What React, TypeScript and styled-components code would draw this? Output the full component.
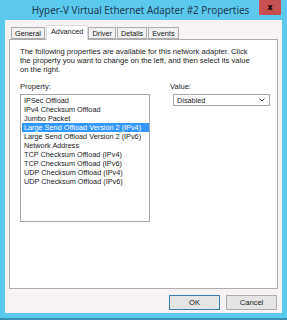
import React, { useState } from "react";
import styled, { createGlobalStyle } from "styled-components";

const GlobalStyle = createGlobalStyle`
  html, body {
    margin: 0;
    padding: 0;
    background: #5bc8ee;
  }
`;

const Frame = styled.div`
  width: 287px;
  height: 320px;
  box-sizing: border-box;
  background: #5bc8ee;
  border-bottom: 2px solid #3a8fb4;
  display: flex;
  flex-direction: column;
  padding: 0 5px 5px 5px;
  font-family: "Liberation Sans", Arial, sans-serif;
`;

const TitleBar = styled.div`
  height: 20px;
  flex: none;
  position: relative;
  display: flex;
  align-items: center;
  justify-content: center;
  padding-right: 6px;
  font-family: "Noto Sans", "Open Sans", sans-serif;
  font-size: 9.9px;
  color: #1f3850;
`;

const CloseButton = styled.div`
  position: absolute;
  top: 0;
  right: 1px;
  width: 22px;
  height: 15px;
  background: #c75050;
  color: #000;
  font-family: "DejaVu Sans", sans-serif;
  font-size: 8px;
  font-weight: bold;
  display: flex;
  align-items: center;
  justify-content: center;
`;

const Client = styled.div`
  flex: 1;
  background: #f6f2f6;
  border-left: 1px solid #eaf6fb;
  display: flex;
  flex-direction: column;
  padding: 5px 4px 0 3px;
`;

const TabStrip = styled.div`
  display: flex;
  align-items: flex-end;
  padding-left: 2px;
  height: 14px;
  position: relative;
  z-index: 1;
`;

const Tab = styled.div<{ $active?: boolean }>`
  box-sizing: border-box;
  height: ${(p) => (p.$active ? "15px" : "12px")};
  margin-bottom: ${(p) => (p.$active ? "-1px" : "0")};
  padding: ${(p) => (p.$active ? "1px 4px 0 4px" : "1px 3px 0 3px")};
  border: 1px solid ${(p) => (p.$active ? "#d9d9d9" : "#adadad")};
  border-bottom: ${(p) => (p.$active ? "none" : "1px solid #adadad")};
  background: ${(p) => (p.$active ? "#ffffff" : "#f0f0f0")};
  margin-right: ${(p) => (p.$active ? "0" : "1px")};
  font-size: 7.3px;
  color: #1a1a1a;
  line-height: 9px;
`;

const Panel = styled.div`
  box-sizing: border-box;
  height: 250px;
  background: #ffffff;
  border: 1px solid #adadad;
  display: flex;
  flex-direction: column;
  padding: 7px 9px 0 10px;
`;

const Intro = styled.div`
  font-size: 7.6px;
  line-height: 9px;
  color: #1a1a1a;
  width: 240px;
`;

const Columns = styled.div`
  display: flex;
  margin-top: 8px;
`;

const LeftCol = styled.div`
  display: flex;
  flex-direction: column;
  width: 130px;
`;

const RightCol = styled.div`
  display: flex;
  flex-direction: column;
  margin-left: 20px;
`;

const Label = styled.div`
  font-size: 7.6px;
  line-height: 9px;
  color: #1a1a1a;
  margin-bottom: 3px;
`;

const ListBox = styled.div`
  box-sizing: border-box;
  width: 130px;
  height: 128px;
  border: 1px solid #a8a8a8;
  padding: 1px 0 0 1px;
  display: flex;
  flex-direction: column;
`;

const ListItem = styled.div<{ $selected?: boolean }>`
  height: 9px;
  line-height: 9px;
  font-size: 7.3px;
  padding-left: 2px;
  white-space: nowrap;
  color: ${(p) => (p.$selected ? "#ffffff" : "#1a1a1a")};
  background: ${(p) => (p.$selected ? "#3399ff" : "transparent")};
`;

const Select = styled.div`
  box-sizing: border-box;
  width: 97px;
  height: 12px;
  margin-left: 3px;
  border: 1px solid #a8a8a8;
  display: flex;
  align-items: center;
  justify-content: space-between;
  padding: 0 4px 0 3px;
  font-size: 7.3px;
  color: #1a1a1a;
`;

const ButtonRow = styled.div`
  display: flex;
  justify-content: flex-end;
  gap: 6px;
  padding: 6px 1px 0 0;
`;

const Button = styled.div<{ $default?: boolean }>`
  box-sizing: border-box;
  width: 51px;
  height: 15px;
  border: 1px solid ${(p) => (p.$default ? "#3c7fb1" : "#adadad")};
  background: #e5e5e5;
  display: flex;
  align-items: center;
  justify-content: center;
  font-size: 7.6px;
  color: #1a1a1a;
`;

const properties = [
  "IPSec Offload",
  "IPv4 Checksum Offload",
  "Jumbo Packet",
  "Large Send Offload Version 2 (IPv4)",
  "Large Send Offload Version 2 (IPv6)",
  "Network Address",
  "TCP Checksum Offload (IPv4)",
  "TCP Checksum Offload (IPv6)",
  "UDP Checksum Offload (IPv4)",
  "UDP Checksum Offload (IPv6)",
];

const tabs = ["General", "Advanced", "Driver", "Details", "Events"];

const App = () => {
  const [selected, setSelected] = useState(3);
  return (
    <>
      <GlobalStyle />
      <Frame>
        <TitleBar>
          Hyper-V Virtual Ethernet Adapter #2 Properties
          <CloseButton>x</CloseButton>
        </TitleBar>
        <Client>
          <TabStrip>
            {tabs.map((t) => (
              <Tab key={t} $active={t === "Advanced"}>
                {t}
              </Tab>
            ))}
          </TabStrip>
          <Panel>
            <Intro>
              The following properties are available for this network adapter. Click
              the property you want to change on the left, and then select its value
              on the right.
            </Intro>
            <Columns>
              <LeftCol>
                <Label>Property:</Label>
                <ListBox>
                  {properties.map((p, i) => (
                    <ListItem key={p} $selected={i === selected} onClick={() => setSelected(i)}>
                      {p}
                    </ListItem>
                  ))}
                </ListBox>
              </LeftCol>
              <RightCol>
                <Label>Value:</Label>
                <Select>
                  <span>Disabled</span>
                  <svg width="6" height="4" viewBox="0 0 6 4">
                    <path d="M0.5 0.5 L3 3 L5.5 0.5" fill="none" stroke="#333" strokeWidth="1" />
                  </svg>
                </Select>
              </RightCol>
            </Columns>
          </Panel>
          <ButtonRow>
            <Button $default>OK</Button>
            <Button>Cancel</Button>
          </ButtonRow>
        </Client>
      </Frame>
    </>
  );
};

export default App;
